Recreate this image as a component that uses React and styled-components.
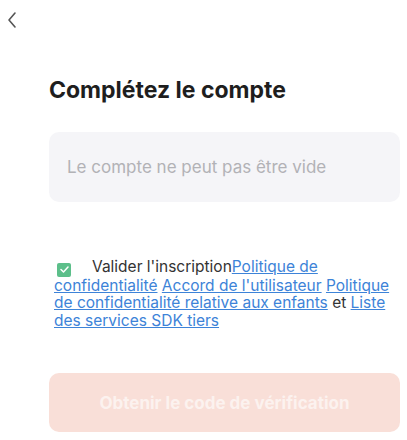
import React from 'react'
import styled, { createGlobalStyle } from 'styled-components'

const GlobalStyle = createGlobalStyle`
    body {
        margin: 0;
        background: #ffffff;
        font-family: Inter, "Liberation Sans", Arial, sans-serif;
    }
`

const Page = styled.div`
    width: 407px;
    height: 440px;
    overflow: hidden;
    background: #ffffff;
`

const TopBar = styled.div`
    height: 40px;
    display: flex;
    align-items: center;
    padding-left: 6px;
`

const BackButton = styled.button`
    border: none;
    background: none;
    padding: 0;
    display: flex;
    color: #555;
`

const Content = styled.div`
    padding: 36px 7px 0 49px;
`

const Title = styled.h1`
    margin: 0;
    font-size: 23px;
    font-weight: 700;
    color: #1e1e1e;
    line-height: 28px;
`

const Field = styled.div`
    margin-top: 28px;
    height: 70px;
    border-radius: 10px;
    background: #f5f5f8;
    display: flex;
    align-items: center;
    padding: 0 18px;
`

const Placeholder = styled.span`
    font-size: 17px;
    color: #b2b2b6;
`

const Terms = styled.p`
    margin: 56px 10px 0 5px;
    font-size: 15.5px;
    line-height: 17.5px;
    color: #333;
`

const Check = styled.span`
    display: inline-flex;
    align-items: center;
    justify-content: center;
    width: 14px;
    height: 14px;
    background: #5cbf8a;
    border-radius: 2px;
    margin: 0 21px 0 3px;
    vertical-align: -1px;
`

const Link = styled.a`
    color: #3d83d8;
    text-decoration: underline;
`

const SubmitButton = styled.button`
    margin-top: 44px;
    width: 100%;
    height: 59px;
    border: none;
    border-radius: 10px;
    background: #f9dfd8;
    color: #fcf2ef;
    font-family: Inter, "Liberation Sans", Arial, sans-serif;
    font-size: 17px;
    font-weight: 700;
`

const App = () => (
    <Page>
        <GlobalStyle />
        <TopBar>
            <BackButton>
                <svg width="14" height="20" viewBox="0 0 14 20" fill="none">
                    <path d="M9 3 L3 10 L9 17" stroke="#555" strokeWidth="1.6" strokeLinecap="round" strokeLinejoin="round" />
                </svg>
            </BackButton>
        </TopBar>
        <Content>
            <Title>Complétez le compte</Title>
            <Field>
                <Placeholder>Le compte ne peut pas être vide</Placeholder>
            </Field>
            <Terms>
                <Check>
                    <svg width="9" height="7" viewBox="0 0 9 7" fill="none">
                        <path d="M1 3.5 L3.5 6 L8 1" stroke="#fff" strokeWidth="1.5" strokeLinecap="round" strokeLinejoin="round" />
                    </svg>
                </Check>
                Valider l'inscription<Link>Politique de confidentialité</Link> <Link>Accord de l'utilisateur</Link> <Link>Politique de confidentialité relative aux enfants</Link> et <Link>Liste des services SDK tiers</Link>
            </Terms>
            <SubmitButton>Obtenir le code de vérification</SubmitButton>
        </Content>
    </Page>
)

export default App
